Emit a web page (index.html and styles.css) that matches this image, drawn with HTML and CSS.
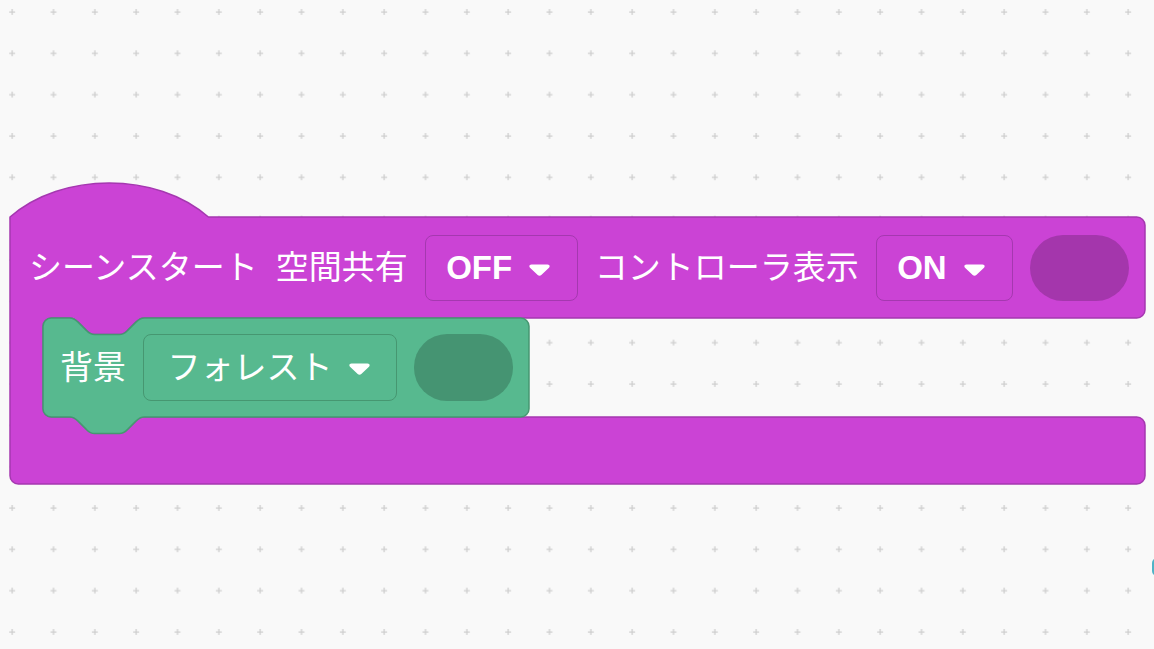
FILE: index.html
```html
<!DOCTYPE html>
<html lang="ja">
<head>
<meta charset="utf-8">
<title>Blocks</title>
<link rel="stylesheet" href="styles.css">
</head>
<body>
<div class="workspace">
  <svg class="grid" width="1154" height="649" aria-hidden="true">
    <defs>
      <pattern id="gridpat" width="41.333" height="41.333" x="8.2" y="8" patternUnits="userSpaceOnUse">
        <path d="M1,4 H7 M4,1 V7" stroke="#cfcfcf" stroke-width="1.3" fill="none"/>
      </pattern>
    </defs>
    <rect width="1154" height="649" fill="url(#gridpat)"/>
  </svg>

  <div class="stack">
    <div class="block block-hat">
      <svg class="shape" width="1135" height="300" aria-hidden="true">
        <path class="shape-hat" d="M0,33 c51.67,-45.47 146.73,-45.47 198.4,0 H1126.73 a8.27,8.27 0 0 1 8.27,8.27 V125.73 a8.27,8.27 0 0 1 -8.27,8.27 H134.2 c-4.13,0 -6.2,2.07 -8.27,4.13 l-8.27,8.27 c-2.07,2.07 -4.13,4.13 -8.27,4.13 h-24.8 c-4.13,0 -6.2,-2.07 -8.27,-4.13 l-8.27,-8.27 c-2.07,-2.07 -4.13,-4.13 -8.27,-4.13 H41.27 a8.27,8.27 0 0 0 -8.27,8.27 V224.73 a8.27,8.27 0 0 0 8.27,8.27 H1126.73 a8.27,8.27 0 0 1 8.27,8.27 V291.73 a8.27,8.27 0 0 1 -8.27,8.27 H8.27 a8.27,8.27 0 0 1 -8.27,-8.27 Z"/>
      </svg>
      <div class="hat-body">
        <div class="row row-top">
          <span class="label label-first">シーンスタート</span>
          <span class="label">空間共有</span>
          <div class="dropdown dropdown-purple">
            <span class="dd-text dd-latin">OFF</span>
            <svg class="arrow" width="21" height="12" viewBox="0 0 21 12" aria-hidden="true"><path d="M2.5,0.5 H18.5 C20.5,0.5 21.3,2.3 20,3.7 L12.3,11 C11.3,12 9.7,12 8.7,11 L1,3.7 C-0.3,2.3 0.5,0.5 2.5,0.5 Z"/></svg>
          </div>
          <span class="label">コントローラ表示</span>
          <div class="dropdown dropdown-purple dropdown-on">
            <span class="dd-text dd-latin">ON</span>
            <svg class="arrow" width="21" height="12" viewBox="0 0 21 12" aria-hidden="true"><path d="M2.5,0.5 H18.5 C20.5,0.5 21.3,2.3 20,3.7 L12.3,11 C11.3,12 9.7,12 8.7,11 L1,3.7 C-0.3,2.3 0.5,0.5 2.5,0.5 Z"/></svg>
          </div>
          <div class="slot slot-purple"></div>
        </div>

        <div class="statement">
          <div class="block block-green">
            <svg class="shape" width="486" height="99" aria-hidden="true">
              <path class="shape-green" d="M0,8.27 a8.27,8.27 0 0 1 8.27,-8.27 H26.8 c4.13,0 6.2,2.07 8.27,4.13 l8.27,8.27 c2.07,2.07 4.13,4.13 8.27,4.13 h24.8 c4.13,0 6.2,-2.07 8.27,-4.13 l8.27,-8.27 c2.07,-2.07 4.13,-4.13 8.27,-4.13 H477.73 a8.27,8.27 0 0 1 8.27,8.27 V90.73 a8.27,8.27 0 0 1 -8.27,8.27 H101.2 c-4.13,0 -6.2,2.07 -8.27,4.13 l-8.27,8.27 c-2.07,2.07 -4.13,4.13 -8.27,4.13 h-24.8 c-4.13,0 -6.2,-2.07 -8.27,-4.13 l-8.27,-8.27 c-2.07,-2.07 -4.13,-4.13 -8.27,-4.13 H8.27 a8.27,8.27 0 0 1 -8.27,-8.27 Z"/>
            </svg>
            <div class="row row-green">
              <span class="label">背景</span>
              <div class="dropdown dropdown-green">
                <span class="dd-text">フォレスト</span>
                <svg class="arrow arrow-green" width="21" height="12" viewBox="0 0 21 12" aria-hidden="true"><path d="M2.5,0.5 H18.5 C20.5,0.5 21.3,2.3 20,3.7 L12.3,11 C11.3,12 9.7,12 8.7,11 L1,3.7 C-0.3,2.3 0.5,0.5 2.5,0.5 Z"/></svg>
              </div>
              <div class="slot slot-green"></div>
            </div>
          </div>
        </div>

        <div class="arm"></div>
      </div>
    </div>
  </div>

  <div class="knob"></div>
</div>
</body>
</html>
```

FILE: styles.css
```css
html, body {
  margin: 0;
  padding: 0;
  height: 100%;
}

body {
  background: #f9f9f9;
  font-family: "Liberation Sans", "Noto Sans CJK JP", sans-serif;
  overflow: hidden;
}

.workspace {
  position: relative;
  width: 1154px;
  height: 649px;
  overflow: hidden;
  background: #f9f9f9;
}

.grid {
  position: absolute;
  left: 0;
  top: 0;
}

.stack {
  position: absolute;
  left: 10px;
  top: 184px;
}

.block {
  display: grid;
}

.block > * {
  grid-area: 1 / 1;
}

.shape {
  overflow: visible;
}

.shape-hat {
  fill: #cb43d5;
  stroke: #a538b0;
  stroke-width: 1.5;
}

.shape-green {
  fill: #57b98f;
  stroke: #469771;
  stroke-width: 1.5;
}

.hat-body {
  display: flex;
  flex-direction: column;
  padding-top: 33px;
  width: 1135px;
}

.row {
  display: flex;
  align-items: center;
  gap: 17px;
  padding-left: 17px;
  color: #ffffff;
  font-size: 33px;
}

.row-top {
  height: 101px;
  padding-left: 19px;
}

.label-first {
  margin-right: 1px;
}

.statement {
  display: flex;
  height: 99px;
  padding-left: 33px;
}

.block-green {
  width: 486px;
}

.row-green {
  height: 99px;
}

.arm {
  height: 67px;
}

.label {
  line-height: 1;
  white-space: nowrap;
}

.dropdown {
  display: flex;
  align-items: center;
  gap: 17px;
  height: 66px;
  box-sizing: border-box;
  padding: 0 26.5px 0 20.5px;
  border-radius: 8px;
  white-space: nowrap;
}

.dropdown-on {
  padding-right: 27.5px;
}

.dropdown-purple {
  border: 1.5px solid #a538b0;
}

.dropdown-green {
  border: 1.5px solid #469771;
  height: 67px;
  gap: 16px;
  padding: 0 26.5px 0 23.5px;
}

.dd-text {
  line-height: 1;
}

.dd-latin {
  font-weight: 700;
}

.arrow {
  fill: #ffffff;
  margin-top: 4px;
  flex: none;
}

.arrow-green {
  margin-top: 3px;
}

.slot {
  width: 99px;
  height: 66px;
  border-radius: 33px;
  flex: none;
}

.slot-purple {
  background: #a436ac;
}

.slot-green {
  background: #459472;
  height: 67px;
}

.knob {
  position: absolute;
  left: 1152px;
  top: 558px;
  width: 10px;
  height: 18px;
  border-radius: 5px;
  background: #4fb3c6;
}
```
